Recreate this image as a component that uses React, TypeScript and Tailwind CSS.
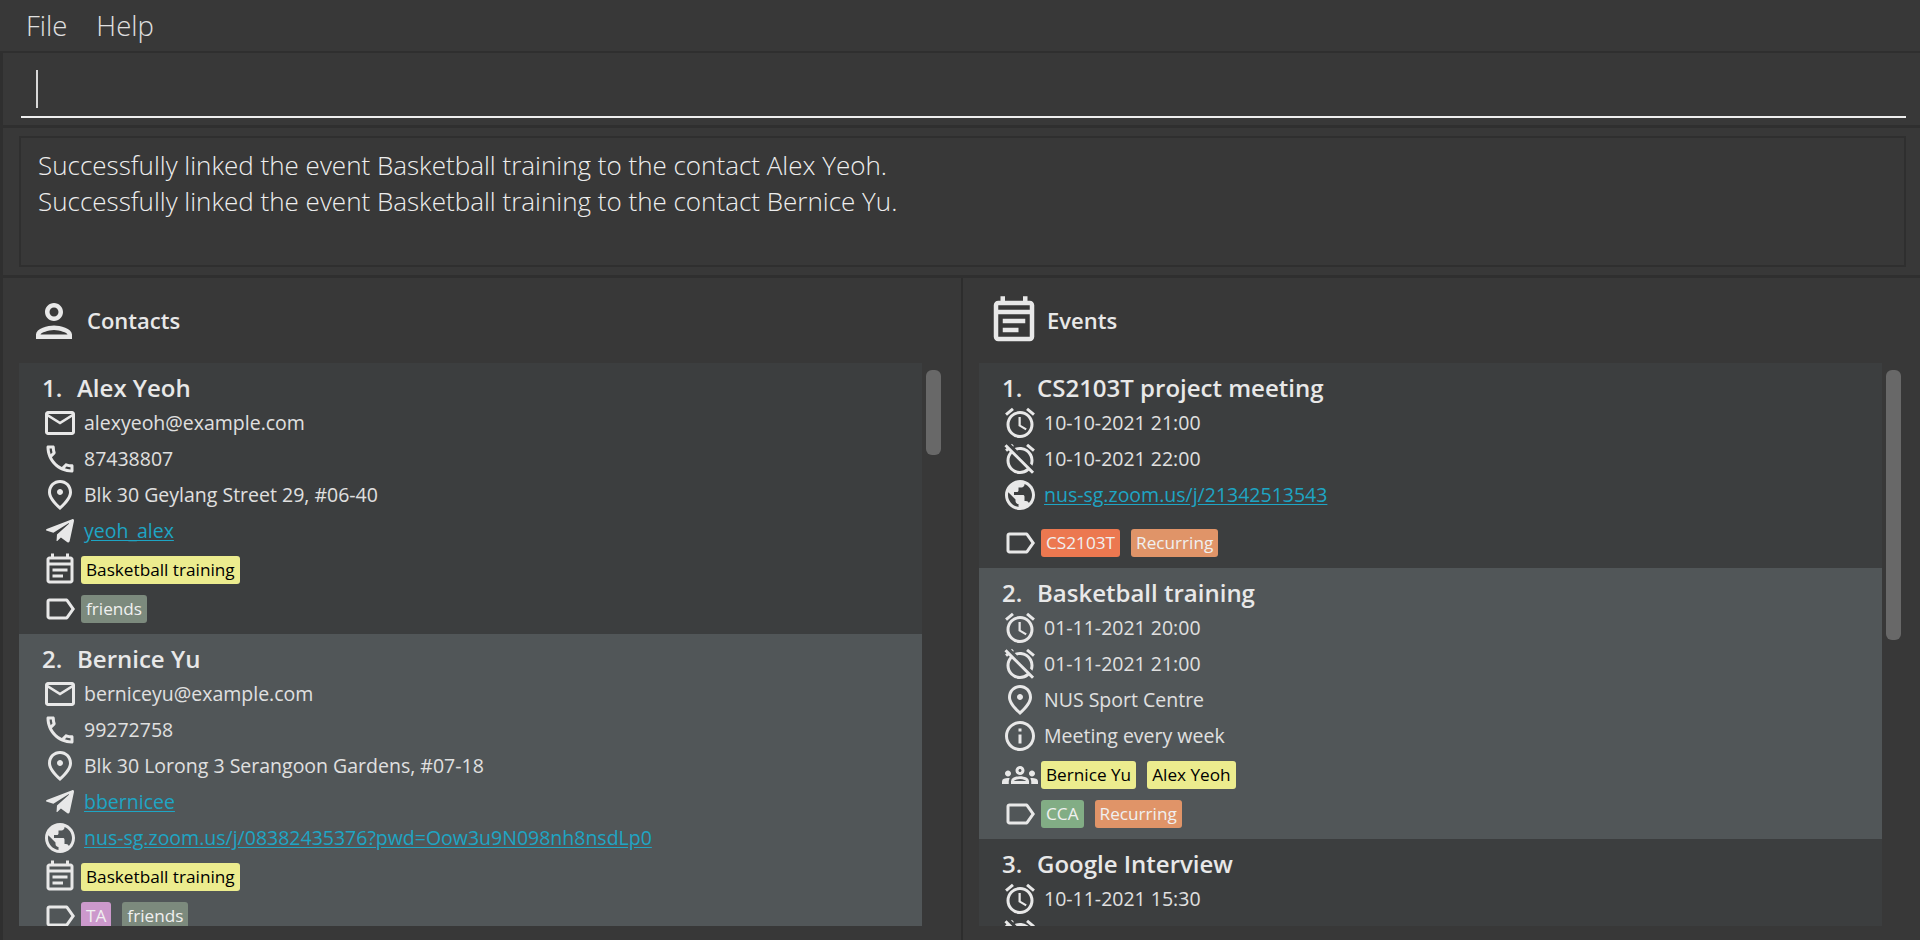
import type { ReactNode } from "react";
import {
  MdOutlineMailOutline,
  MdOutlinePhone,
  MdOutlinePlace,
  MdPublic,
  MdOutlineEventNote,
  MdOutlineLabel,
  MdOutlineAlarm,
  MdOutlineAlarmOff,
  MdInfoOutline,
  MdOutlineGroups,
  MdOutlinePerson,
} from "react-icons/md";
import { FaTelegramPlane } from "react-icons/fa";
import type { IconType } from "react-icons";

type RowData = { icon: IconType; text: string; link?: boolean; small?: boolean };
type ChipData = { text: string; bg: string; dark?: boolean };
type CardData = {
  index: number;
  name: string;
  rows: RowData[];
  gapBeforeChips?: boolean;
  linked?: { icon: IconType; chips: ChipData[] };
  tags?: ChipData[];
};

const yellow = "bg-[#ecec8e]";

function Chip({ chip }: { chip: ChipData }) {
  return (
    <span
      className={`flex h-[28px] items-center rounded-[3px] px-[5px] text-[17.2px] font-medium ${chip.bg} ${
        chip.dark ? "text-black" : "text-[#f0f0f0]"
      }`}
    >
      {chip.text}
    </span>
  );
}

function ChipRow({ icon: Icon, chips, extra = "" }: { icon: IconType; chips: ChipData[]; extra?: string }) {
  return (
    <div className={`flex h-[39px] items-center ${extra}`}>
      <Icon size={36} className="shrink-0 text-[#e8e8e8]" />
      <div className="ml-[3px] flex gap-[11px]">
        {chips.map((c) => (
          <Chip key={c.text} chip={c} />
        ))}
      </div>
    </div>
  );
}

function Card({ card, alt }: { card: CardData; alt: boolean }) {
  return (
    <div className={`shrink-0 pl-[23px] pb-[6px] pt-[8px] ${alt ? "bg-[#515658]" : "bg-[#3c3e3f]"}`}>
      <div className="flex h-[34px] items-center whitespace-pre text-[24px] font-semibold leading-none text-[#e8e8e8]">
        <span className="w-[35px]">{card.index}.</span>
        <span>{card.name}</span>
      </div>
      {card.rows.map((r, i) => (
        <div key={i} className="flex h-[36px] items-center">
          <r.icon size={r.small ? 32 : 36} className={`shrink-0 text-[#e8e8e8] ${r.small ? "mx-[2px]" : ""}`} />
          {r.text &&
            (r.link ? (
              <span className="ml-[6px] text-[19.5px] text-[#1ea5c4] underline underline-offset-2">{r.text}</span>
            ) : (
              <span className="ml-[6px] text-[19.5px] text-[#e0e0e0]">{r.text}</span>
            ))}
        </div>
      ))}
      {card.linked && <ChipRow icon={card.linked.icon} chips={card.linked.chips} extra="mt-[1px]" />}
      {card.tags && (
        <ChipRow
          icon={MdOutlineLabel}
          chips={card.tags}
          extra={card.gapBeforeChips ? "mt-[10px]" : card.linked ? "" : "mt-[1px]"}
        />
      )}
    </div>
  );
}

function Panel({
  title,
  icon: Icon,
  cards,
  thumb,
  right,
}: {
  title: string;
  icon: IconType;
  cards: CardData[];
  thumb: string;
  right?: boolean;
}) {
  return (
    <section className={`flex min-w-0 flex-col pl-[16px] ${right ? "w-[957px] border-l-2 border-[#2d2d2d]" : "w-[958px]"}`}>
      <div className="flex h-[85px] shrink-0 items-center pl-[8px]">
        <Icon size={54} className="shrink-0 text-[#e8e8e8]" />
        <h2 className="ml-[6px] text-[22px] font-semibold text-[#e8e8e8]">{title}</h2>
      </div>
      <div className="flex h-[563px] shrink-0">
        <div className="flex w-[903px] shrink-0 flex-col overflow-hidden">
          {cards.map((c, i) => (
            <Card key={c.name} card={c} alt={i % 2 === 1} />
          ))}
        </div>
        <div className="ml-[4px] w-[15px] shrink-0 pt-[7px]">
          <div className={`w-[15px] rounded-[6px] bg-[#686868] ${thumb}`} />
        </div>
      </div>
    </section>
  );
}

const contacts: CardData[] = [
  {
    index: 1,
    name: "Alex Yeoh",
    rows: [
      { icon: MdOutlineMailOutline, text: "alexyeoh@example.com" },
      { icon: MdOutlinePhone, text: "87438807" },
      { icon: MdOutlinePlace, text: "Blk 30 Geylang Street 29, #06-40" },
      { icon: FaTelegramPlane, text: "yeoh_alex", link: true, small: true },
    ],
    linked: { icon: MdOutlineEventNote, chips: [{ text: "Basketball training", bg: yellow, dark: true }] },
    tags: [{ text: "friends", bg: "bg-[#7c8a7d]" }],
  },
  {
    index: 2,
    name: "Bernice Yu",
    rows: [
      { icon: MdOutlineMailOutline, text: "berniceyu@example.com" },
      { icon: MdOutlinePhone, text: "99272758" },
      { icon: MdOutlinePlace, text: "Blk 30 Lorong 3 Serangoon Gardens, #07-18" },
      { icon: FaTelegramPlane, text: "bbernicee", link: true, small: true },
      { icon: MdPublic, text: "nus-sg.zoom.us/j/08382435376?pwd=Oow3u9N098nh8nsdLp0", link: true },
    ],
    linked: { icon: MdOutlineEventNote, chips: [{ text: "Basketball training", bg: yellow, dark: true }] },
    tags: [
      { text: "TA", bg: "bg-[#cc99cc]" },
      { text: "friends", bg: "bg-[#7c8a7d]" },
    ],
  },
];

const events: CardData[] = [
  {
    index: 1,
    name: "CS2103T project meeting",
    rows: [
      { icon: MdOutlineAlarm, text: "10-10-2021 21:00" },
      { icon: MdOutlineAlarmOff, text: "10-10-2021 22:00" },
      { icon: MdPublic, text: "nus-sg.zoom.us/j/21342513543", link: true },
    ],
    gapBeforeChips: true,
    tags: [
      { text: "CS2103T", bg: "bg-[#ec7850]" },
      { text: "Recurring", bg: "bg-[#e09468]" },
    ],
  },
  {
    index: 2,
    name: "Basketball training",
    rows: [
      { icon: MdOutlineAlarm, text: "01-11-2021 20:00" },
      { icon: MdOutlineAlarmOff, text: "01-11-2021 21:00" },
      { icon: MdOutlinePlace, text: "NUS Sport Centre" },
      { icon: MdInfoOutline, text: "Meeting every week" },
    ],
    linked: {
      icon: MdOutlineGroups,
      chips: [
        { text: "Bernice Yu", bg: yellow, dark: true },
        { text: "Alex Yeoh", bg: yellow, dark: true },
      ],
    },
    tags: [
      { text: "CCA", bg: "bg-[#82ad85]" },
      { text: "Recurring", bg: "bg-[#e09468]" },
    ],
  },
  {
    index: 3,
    name: "Google Interview",
    rows: [
      { icon: MdOutlineAlarm, text: "10-11-2021 15:30" },
      { icon: MdOutlineAlarmOff, text: "" },
    ],
  },
];

function Menu({ children }: { children: ReactNode }) {
  return <span className="text-[27.5px] font-light text-[#e0e0e0]">{children}</span>;
}

export default function App() {
  return (
    <div className="flex h-[940px] w-[1920px] flex-col overflow-hidden bg-[#383838] font-['Open_Sans','Noto_Sans',sans-serif]">
      <header className="flex h-[53px] shrink-0 items-center gap-[29px] border-b-2 border-[#2f2f2f] pl-[26px]">
        <Menu>File</Menu>
        <Menu>Help</Menu>
      </header>
      <div className="flex h-[75px] shrink-0 flex-col border-b-[3px] border-l-[3px] border-[#2f2f2f] pl-[18px] pr-[14px]">
        <div className="mt-[17px] h-[38px] w-[2px] translate-x-[15px] bg-[#d8d8d8]" />
        <div className="mt-[8px] h-[2px] bg-[#eeeeee]" />
      </div>
      <div className="h-[150px] shrink-0 border-b-[3px] border-l-[3px] border-[#2f2f2f] pl-[16px] pr-[14px] pt-[8px]">
        <div className="h-[131px] border-2 border-[#2f2f2f] pl-[17px] pt-[9px] text-[26px] font-light leading-[36px] text-[#eeeeee]">
          <p>Successfully linked the event Basketball training to the contact Alex Yeoh.</p>
          <p>Successfully linked the event Basketball training to the contact Bernice Yu.</p>
        </div>
      </div>
      <main className="flex min-h-0 flex-1 border-l-[3px] border-[#2f2f2f]">
        <Panel title="Contacts" icon={MdOutlinePerson} cards={contacts} thumb="h-[85px]" />
        <Panel title="Events" icon={MdOutlineEventNote} cards={events} thumb="h-[270px]" right />
      </main>
    </div>
  );
}
